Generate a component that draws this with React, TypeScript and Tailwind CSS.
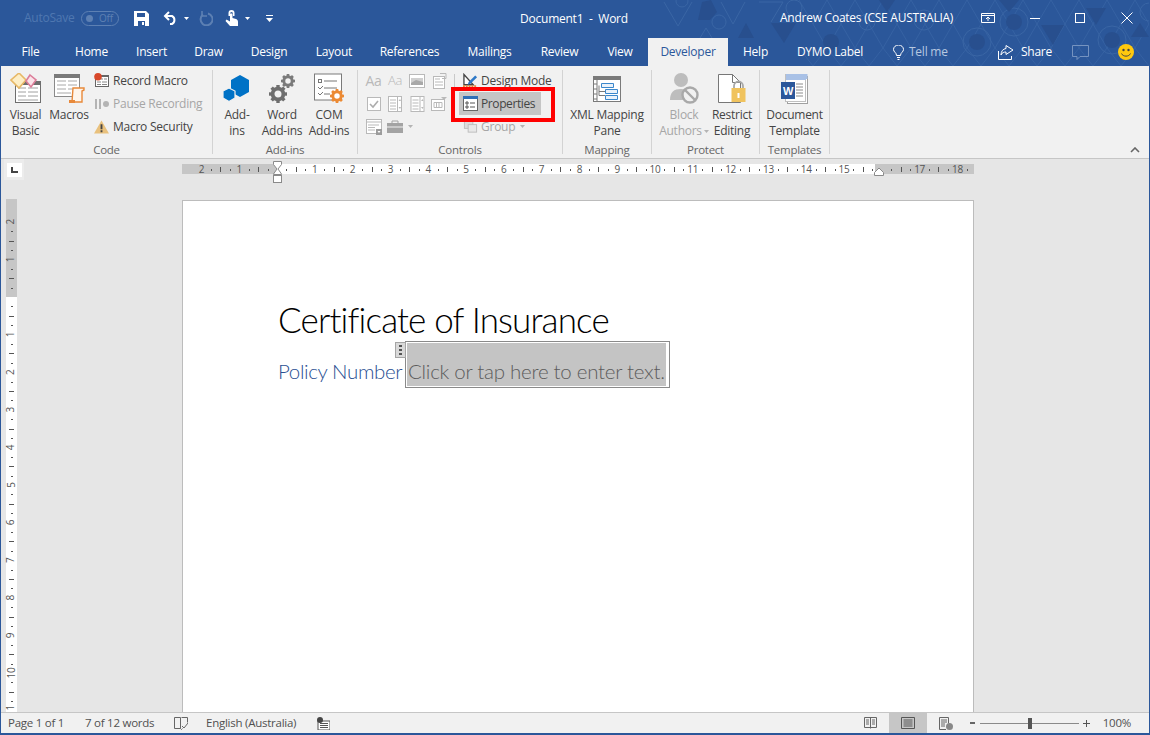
import React from "react";

const Caret = ({ c = "#fff", w = 5 }: { c?: string; w?: number }) => (
  <svg width={w} height={3} viewBox="0 0 5 3" className="shrink-0"><path d="M0 0h5L2.500 3z" fill={c} /></svg>
);

const Pattern = () => {
  const tri: string[] = [];
  for (let i = 0; i < 13; i++) {
    const x = 800 + i * 28;
    tri.push(`M${x} 0l14 24 14-24`);
    tri.push(`M${x + 14} 24l14 24 14-24`);
    tri.push(`M${x} 48l14 18 14-18`);
  }
  return (
    <svg width={490} height={66} viewBox="660 0 490 66" className="absolute right-0 top-0" fill="none">
      <g stroke="#3a66a5" strokeWidth="1">
        <path d="M665 2l14 24 14-24M722 2l12 22 12-22M695 48l12-20 12 20M760 2h24l-12 20M705 48l-10 18" />
        <circle cx="720" cy="22" r="7" /><circle cx="683" cy="1" r="6" /><circle cx="795" cy="8" r="8" />
        <path d={tri.join("")} opacity=".75" />
        <circle cx="1015" cy="22" r="14" /><circle cx="978" cy="42" r="14" /><circle cx="1113" cy="40" r="14" />
        <circle cx="925" cy="20" r="10" /><circle cx="1150" cy="12" r="9" /><circle cx="868" cy="22" r="8" />
      </g>
      <g fill="#284f8e">
        <path d="M703 2l9-2 6 12-7 8-12 0z" /><path d="M747 23l8 15h-16z" /><path d="M772 23h25l-12 20z" />
        <circle cx="832" cy="42" r="8" /><circle cx="978" cy="42" r="8" /><circle cx="1015" cy="22" r="8" /><circle cx="1113" cy="40" r="8" />
        <path d="M1042 25h23l-11 20z" /><path d="M1087 8h20l-10 17z" /><path d="M1132 37l9-14 9 14z" /><path d="M1000 0h20l-10 12z" />
        <path d="M880 0h16l-8 12z" />
      </g>
    </svg>
  );
};

const TABS: [string, string][] = [
  ["File", "w-[59px]"], ["Home", "w-[63px]"], ["Insert", "w-[57px]"], ["Draw", "w-[57px]"], ["Design", "w-[64px]"],
  ["Layout", "w-[66px]"], ["References", "w-[85px]"], ["Mailings", "w-[75px]"], ["Review", "w-[65px]"], ["View", "w-[56px]"],
];

const Group = ({ w, label, children }: { w: string; label: string; children?: React.ReactNode }) => (
  <>
    <div className={`${w} h-full flex flex-col shrink-0`}>
      <div className="h-[77px] flex">{children}</div>
      <div className="h-[14px] text-center leading-[14px] text-[#666] text-[11.5px]">{label}</div>
    </div>
    <div className="w-px bg-[#d3d3d3] mt-[4px] mb-[4px] shrink-0" />
  </>
);

const Large = ({ w, icon, lines, dim }: { w: string; icon: React.ReactNode; lines: React.ReactNode[]; dim?: boolean }) => (
  <div className={`${w} flex flex-col items-center shrink-0 pt-[6px]`}>
    <div className="h-[33px] flex items-center justify-center">{icon}</div>
    <div className={`text-center leading-[16px] pt-[2px] whitespace-nowrap ${dim ? "text-[#a6a6a6]" : "text-[#444]"}`}>
      {lines.map((l, i) => <div key={i} className="flex justify-center items-center gap-[3px]">{l}</div>)}
    </div>
  </div>
);

const Small = ({ icon, text, dim, caret, tight }: { icon: React.ReactNode; text: string; dim?: boolean; caret?: boolean; tight?: boolean }) => (
  <div className={`h-[23px] flex items-center whitespace-nowrap ${dim ? "text-[#a6a6a6]" : "text-[#444]"}`}>
    <div className="w-[15px] h-[16px] flex items-center justify-center shrink-0">{icon}</div>
    <span className={tight ? "ml-[3px]" : "ml-[4px]"}>{text}</span>
    {caret && <span className="ml-[5px]"><Caret c="#b4b4b4" /></span>}
  </div>
);

/* ---- ribbon icons ---- */
const VisualBasicIcon = () => (
  <svg width={32} height={32} viewBox="0 0 32 32">
    <rect x="5.500" y="8.500" width="25" height="21" fill="#fff" stroke="#6e6e6e" />
    <rect x="5" y="8" width="26" height="4" fill="#6e6e6e" />
    <path d="M8 15h8M18 15h10M8 19h8M18 19h10M8 23h8M18 23h10M8 27h20" stroke="#a0a0a0" />
    <path d="M9 0l7 7-7 8-8-8z" fill="#fdeec6" stroke="#e7b866" strokeWidth="1.600" />
    <path d="M20 2l6 5-5 7-5-6z" fill="#fbe3ea" stroke="#dc7d99" strokeWidth="1.600" />
  </svg>
);
const MacrosIcon = () => (
  <svg width={32} height={32} viewBox="0 0 32 32">
    <rect x="1.500" y="1.500" width="25" height="22" fill="#fff" stroke="#8a8a8a" />
    <rect x="1" y="1" width="26" height="4" fill="#7a7a7a" />
    <path d="M4 8h9M15 8h9M4 12h9M15 12h9M4 16h9M15 16h9M4 20h14" stroke="#a8a8a8" />
    <path d="M20 15h11v2l-2 1v11h-10z" fill="#fff6ec" stroke="#e8893a" strokeWidth="1.400" />
    <path d="M16 27h6v3h-6z" fill="#e8893a" />
  </svg>
);
const RecordIcon = () => (
  <svg width={15} height={15} viewBox="0 0 15 15">
    <rect x="1.500" y="2.500" width="13" height="11" fill="#fff" stroke="#666" />
    <rect x="1" y="2" width="14" height="2" fill="#666" />
    <path d="M7 6h2M10 6h3M3 9h4M8 9h5M3 11.500h4M8 11.500h5" stroke="#888" />
    <circle cx="4" cy="3.800" r="3.800" fill="#d8482a" />
  </svg>
);
const PauseIcon = () => (
  <svg width={15} height={10} viewBox="0 0 15 10"><path d="M1 0h2v10H1zM5 0h2v10H5z" fill="#b4b4b4" /><circle cx="12" cy="5" r="3" fill="#b4b4b4" /></svg>
);
const WarnIcon = () => (
  <svg width={16} height={14} viewBox="0 0 16 14"><path d="M8 0l8 14H0z" fill="#e9c17d" /><path d="M7 4h2v5.500H7zM7 10.500h2V12.500H7z" fill="#444" /></svg>
);
const AddInsIcon = () => (
  <svg width={28} height={28} viewBox="0 0 28 28">
    <path d="M17 0l9 5v12l-9 5-9-5V5z" fill="#0072c6" />
    <path d="M6 13l6 3v7l-6 3.500L0 23v-7z" fill="#0072c6" stroke="#f1f1f1" strokeWidth="1.200" />
  </svg>
);
const Gear = ({ cx, cy, r, c }: { cx: number; cy: number; r: number; c: string }) => (
  <g>
    <circle cx={cx} cy={cy} r={r * 0.6} fill="none" stroke={c} strokeWidth={r * 0.42} />
    <g stroke={c} strokeWidth={r * 0.38}>
      {[0, 45, 90, 135, 180, 225, 270, 315].map((a) => {
        const dx = Math.cos((a * Math.PI) / 180), dy = Math.sin((a * Math.PI) / 180);
        return <line key={a} x1={cx + dx * r * 0.7} y1={cy + dy * r * 0.7} x2={cx + dx * r} y2={cy + dy * r} />;
      })}
    </g>
  </g>
);
const WordAddinsIcon = () => (
  <svg width={28} height={30} viewBox="0 0 28 30"><Gear cx={20} cy={7} r={7} c="#7a7a7a" /><Gear cx={10} cy={20} r={9} c="#6e6e6e" /></svg>
);
const ComIcon = () => (
  <svg width={32} height={32} viewBox="0 0 32 32">
    <rect x="1.500" y="1" width="27" height="26" fill="#fff" stroke="#7a7a7a" />
    <rect x="5.500" y="6.500" width="3" height="3" fill="none" stroke="#777" />
    <path d="M11 8h13M5 14l2 2 3-3M11 15h13M5 20l2 2 3-3M11 21h6" stroke="#777" fill="none" />
    <Gear cx={24} cy={23} r={7} c="#ec8a33" />
  </svg>
);
const D = "#b9b9b9";
const Aa1 = () => <span className="text-[14px] font-medium leading-none text-[#b9b9b9]">Aa</span>;
const Aa2 = () => <span className="text-[13px] font-light leading-none text-[#b9b9b9]">Aa</span>;
const PicIcon = () => (<svg width={16} height={14} viewBox="0 0 16 14"><rect x=".5" y=".5" width="15" height="13" fill="#fff" stroke={D} /><path d="M2 4h12v7H2z" fill="#cfcfcf" /><path d="M2 9l5-3 7 2v3H2z" fill="#a8a8a8" /></svg>);
const BuildIcon = () => (<svg width={16} height={16} viewBox="0 0 16 16" fill="none" stroke={D}><rect x="2.500" y="3.500" width="11" height="12" fill="#fff" /><path d="M4 6h5M4 9h8M4 12h8M9 .5h6v5h-4" /></svg>);
const CheckIcon = () => (<svg width={14} height={14} viewBox="0 0 14 14" fill="none"><rect x=".5" y=".5" width="13" height="13" stroke={D} fill="#fff" /><path d="M3 7l3 3 5-6" stroke="#adadad" strokeWidth="1.600" /></svg>);
const ListIcon = ({ w = 16 }: { w?: number }) => (<svg width={w} height={16} viewBox="0 0 14 16" fill="none" stroke={D}><rect x=".5" y=".5" width="13" height="15" fill="#fff" /><path d="M2 4h6M2 7h6M2 10h6M2 13h6M9.500 0v16" /><path d="M10.500 5l1.500-2 1 2zM10.500 11l1.500 2 1-2z" fill={D} stroke="none" /></svg>);
const TableIcon = () => (<svg width={16} height={14} viewBox="0 0 16 14" fill="none" stroke={D}><rect x=".5" y="2.500" width="13" height="11" fill="#fff" /><path d="M3 5.500h8v5H3zM5.500 5.500v5M8 5.500v5" /><path d="M10 0h6l-3 3z" fill={D} stroke="none" /></svg>);
const FormIcon = () => (<svg width={16} height={16} viewBox="0 0 16 16" fill="none" stroke={D}><rect x=".5" y=".5" width="15" height="14" fill="#fff" /><path d="M0 3h16M2 6h11M2 8.500h7M2 11h7" /><path d="M10 10h6v6h-6z" fill="#9c9c9c" stroke="none" /><path d="M11.500 12h3L13 14z" fill="#fff" stroke="none" /></svg>);
const CaseIcon = () => (<svg width={18} height={13} viewBox="0 0 18 13"><path d="M0 3h16v10H0z" fill="#a3a3a3" /><path d="M5 3V1h6v2" fill="none" stroke="#a3a3a3" /><path d="M0 7h16" stroke="#f1f1f1" /></svg>);
const DesignIcon = () => (
  <svg width={16} height={16} viewBox="0 0 16 16">
    <path d="M1 1v11h10z" fill="#fff" stroke="#444" strokeWidth="1.400" />
    <path d="M6 9l7-7 2 2-7 7-3 1z" fill="#2f79c7" />
    <path d="M0 13.500h14" stroke="#e8893a" strokeWidth="2" strokeDasharray="2 1" />
  </svg>
);
const PropIcon = () => (
  <svg width={15} height={15} viewBox="0 0 15 15">
    <rect x=".5" y=".5" width="14" height="14" fill="#fff" stroke="#666" />
    <rect x="0" y="0" width="15" height="3" fill="#2f6fb7" />
    <path d="M3 6h2v2H3zM3 10h2v2H3z" fill="none" stroke="#555" /><path d="M7 7h5M7 11h5" stroke="#555" />
  </svg>
);
const GroupIcon = () => (
  <svg width={16} height={15} viewBox="0 0 16 15" fill="none" stroke="#bdbdbd">
    <rect x="1.500" y="1.500" width="9" height="8" fill="#dcdcdc" /><rect x="5.500" y="5.500" width="9" height="8" fill="#e8e8e8" />
  </svg>
);
const XmlIcon = () => (
  <svg width={28} height={26} viewBox="0 0 28 26">
    <rect x=".5" y=".5" width="27" height="25" fill="#fff" stroke="#7a7a7a" />
    <rect x="0" y="0" width="28" height="4" fill="#7a7a7a" /><path d="M4 0v26M1 8h3M1 13h3M1 18h3M1 23h3" stroke="#7a7a7a" />
    <path d="M8.500 7.500h12v4h-12zM12.500 13.500h12v4h-12zM12.500 19.500h12v4h-12z" fill="#e9f2fb" stroke="#3a87cc" />
    <path d="M6 9.500v10h6M6 15.500h6" stroke="#7a7a7a" fill="none" />
  </svg>
);
const BlockIcon = () => (
  <svg width={31} height={31} viewBox="0 0 31 31">
    <circle cx="12" cy="7" r="7" fill="#bdbdbd" /><path d="M1 27c0-8 4-11 11-11s11 3 11 11z" fill="#bdbdbd" />
    <circle cx="21" cy="22" r="7.500" fill="#f1f1f1" stroke="#a9a9a9" strokeWidth="2.400" /><path d="M16 17l10 10" stroke="#a9a9a9" strokeWidth="2.400" />
  </svg>
);
const RestrictIcon = () => (
  <svg width={30} height={32} viewBox="0 0 30 32">
    <path d="M1.500 1.500h14l8 8v20h-22z" fill="#fff" stroke="#777" /><path d="M15.500 1.500v8h8" fill="none" stroke="#777" />
    <path d="M17 15v-2a4.500 4.500 0 0 1 9 0v2" fill="none" stroke="#a8a8a8" strokeWidth="1.800" />
    <rect x="14.500" y="15" width="14" height="14" fill="#f0c35e" /><rect x="20.500" y="20" width="2" height="5" fill="#fff" />
  </svg>
);
const TemplateIcon = () => (
  <svg width={28} height={30} viewBox="0 0 28 30">
    <rect x="6.500" y="2.500" width="20" height="27" fill="#fff" stroke="#a0a0a0" /><rect x="5.500" y="0" width="21" height="5" fill="#a9c1e6" />
    <rect x="4.500" y=".5" width="20" height="27" fill="#fff" stroke="#c0c0c0" /><rect x="5" y="0" width="20" height="6" fill="#a9c1e6" />
    <path d="M15 10h7M15 13h7M15 16h7M15 19h7M15 22h7" stroke="#8c8c8c" />
    <rect x="0" y="8" width="14" height="17" fill="#2b579a" />
    <text x="7" y="20.500" textAnchor="middle" fill="#fff" fontSize="11" fontWeight="700" fontFamily="Liberation Sans">W</text>
  </svg>
);

/* ---- rulers ---- */
const HRuler = () => {
  const cm = 37.8, o = 95;
  const marks: React.ReactNode[] = [];
  for (let n = -2; n <= 18; n++) {
    const x = o + n * cm;
    if (n !== 0 && n !== 16) marks.push(<text key={"t" + n} x={x} y={12} textAnchor="middle" fontSize="10" fill="#555" fontFamily="Open Sans">{Math.abs(n)}</text>);
    [0.25, 0.5, 0.75].forEach((f) => {
      const px = x + f * cm;
      if (px < 2 || px > 790) return;
      if (f === 0.5) marks.push(<rect key={`m${n}${f}`} x={Math.round(px)} y={6} width={1} height={5} fill="#555" />);
      else marks.push(<rect key={`m${n}${f}`} x={Math.round(px)} y={8} width={1} height={2} fill="#555" />);
    });
  }
  return (
    <svg width={800} height={26} viewBox="0 0 800 26" className="block">
      <rect x="0" y="3" width="792" height="10" fill="#fff" />
      <rect x="0" y="3" width="95" height="10" fill="#c6c6c6" /><rect x="693" y="3" width="99" height="10" fill="#c6c6c6" />
      {marks}
      <path d="M91.500 .5h8v3l-3.500 4.500 3.500 5v.5h-8v-.5l3.500-5-3.500-4.500z" fill="#fff" stroke="#8a8a8a" />
      <rect x="91.500" y="14.500" width="8" height="7" fill="#fff" stroke="#8a8a8a" />
      <path d="M692.500 14.500h9v-3l-4.500-4.500-4.500 4.500z" fill="#fff" stroke="#8a8a8a" />
    </svg>
  );
};
const VRuler = () => {
  const cm = 37.6, o = 98;
  const marks: React.ReactNode[] = [];
  for (let n = -2; n <= 11; n++) {
    const y = o + n * cm;
    if (n !== 0) marks.push(<text key={"t" + n} x={5.500} y={y + 3} textAnchor="middle" fontSize="10" fill="#555" fontFamily="Open Sans" transform={`rotate(-90 5.500 ${y})`}>{Math.abs(n)}</text>);
    [0.25, 0.5, 0.75].forEach((f) => {
      const py = Math.round(y + f * cm);
      if (py > 513) return;
      if (f === 0.5) marks.push(<rect key={`m${n}${f}`} x={3} y={py} width={5} height={1} fill="#555" />);
      else marks.push(<rect key={`m${n}${f}`} x={5} y={py} width={2} height={1} fill="#555" />);
    });
  }
  return (
    <svg width={17} height={513} viewBox="-3 0 17 513" className="block">
      <rect width="11" height="513" fill="#fff" /><rect width="11" height="98" fill="#c6c6c6" />{marks}
    </svg>
  );
};

export default function App() {
  return (
    <div className="w-[1150px] h-[735px] overflow-hidden flex flex-col border-x border-b-2 border-[#2b579a] bg-[#f1f1f1] font-['Open_Sans',sans-serif] text-[12px] tracking-[-0.25px]">
      {/* title + tabs */}
      <div className="bg-[#2b579a] relative h-[66px] shrink-0 text-white">
        <Pattern />
        <div className="relative h-[38px] flex items-center pb-[2px]">
          <div className="ml-[23px] w-[57px] text-[#4f77b1] text-[12px]">AutoSave</div>
          <div className="w-[38px] h-[15px] rounded-full border border-[#5d80b3] flex items-center pl-[4px] gap-[6px] text-[10px] text-[#5d80b3]">
            <span className="w-[7px] h-[7px] rounded-full bg-[#5d80b3]" /><span>Off</span>
          </div>
          <svg width={15} height={15} viewBox="0 0 15 15" className="ml-[15px]"><path d="M0 0h12l3 3v12H0z" fill="#fff" /><path d="M3 2h8v4H3zM4 10h7v5H4z" fill="#2b579a" /><path d="M8 11h2v3H8z" fill="#fff" /></svg>
          <svg width={15} height={14} viewBox="0 0 15 14" className="ml-[14px]" fill="none" stroke="#fff" strokeWidth="2"><path d="M6 1L2 5l4 4" /><path d="M2 5h7a4.500 4.500 0 0 1 0 8H7" /></svg>
          <span className="ml-[6px]"><Caret /></span>
          <svg width={14} height={15} viewBox="0 0 14 15" className="ml-[10px]" fill="none" stroke="#5d80b3" strokeWidth="2"><path d="M9 2.500a6 6 0 1 1-5 1" /><path d="M3 0v5h5" strokeWidth="1.600" /></svg>
          <svg width={13} height={16} viewBox="0 0 13 16" className="ml-[12px]"><path d="M3.500 6V3a3 3 0 0 1 6 0v3H8V3.500a1.500 1.500 0 0 0-3 0V6z" fill="#fff" /><path d="M5 3.500h2.500v4.500l3.500 1c1.500.5 2 1.500 2 3V16H5l-4.500-5 1-1.500L5 11.500z" fill="#fff" /></svg>
          <span className="ml-[7px]"><Caret /></span>
          <svg width={7} height={7} viewBox="0 0 7 7" className="ml-[16px]"><path d="M0 0h7v1H0zM0 3h7L3.500 7z" fill="#fff" /></svg>
          <div className="ml-[226px] mt-[2px] w-[150px] text-center whitespace-nowrap">Document1&nbsp; -&nbsp; Word</div>
          <div className="ml-[131px] w-[180px] whitespace-nowrap">Andrew Coates (CSE AUSTRALIA)</div>
          <svg width={14} height={10} viewBox="0 0 14 10" className="ml-[21px]" fill="none" stroke="#fff"><path d="M.5.500h13v9H.5zM.5 2.500h13M7 8V4M5 6l2-2 2 2" /></svg>
          <div className="ml-[35px] w-[10px] h-px bg-white" />
          <div className="ml-[35px] w-[10px] h-[10px] border border-white" />
          <svg width={12} height={12} viewBox="0 0 12 12" className="ml-[36px]" stroke="#fff"><path d="M.5.500l11 11M11.500.500l-11 11" /></svg>
        </div>
        <div className="relative h-[28px] flex items-center">
          {TABS.map(([t, w]) => <div key={t} className={`${w} text-center`}>{t}</div>)}
          <div className="w-[80px] h-[28px] bg-[#f1f1f1] text-[#2b579a] flex items-center justify-center">Developer</div>
          <div className="w-[55px] text-center">Help</div>
          <div className="w-[94px] text-center whitespace-nowrap">DYMO Label</div>
          <svg width={11} height={15} viewBox="0 0 11 15" className="ml-[16px]" fill="none" stroke="#fff"><path d="M3.500 10.500c0-3-3-3.500-3-6a5 4.500 0 0 1 10 0c0 2.500-3 3-3 6zM4 12.500h3M4.500 14.500h2" /></svg>
          <div className="ml-[5px] w-[60px] text-[#b7c8e0] whitespace-nowrap">Tell me</div>
          <svg width={16} height={15} viewBox="0 0 16 15" className="ml-[29px]" fill="none" stroke="#fff"><path d="M.5 6v8.500h13V11" /><path d="M8 .5l7 4.500-7 4.500V7c-2 0-4 .5-5 3 0-4 2-6 5-6.500z" /></svg>
          <div className="ml-[7px] w-[40px] whitespace-nowrap">Share</div>
          <svg width={17} height={15} viewBox="0 0 17 15" className="ml-[11px]" fill="none" stroke="#7593c0"><path d="M.5.500h16v11H8l-3 3v-3H.5z" /></svg>
          <svg width={16} height={16} viewBox="0 0 16 16" className="ml-[29px]"><circle cx="8" cy="8" r="8" fill="#ffc90e" /><circle cx="5.500" cy="6" r="1.200" fill="#444" /><circle cx="10.500" cy="6" r="1.200" fill="#444" /><path d="M3.500 9.500c1.500 3.500 7.500 3.500 9 0" fill="none" stroke="#444" /></svg>
        </div>
      </div>

      {/* ribbon */}
      <div className="h-[93px] shrink-0 border-b border-[#c6c6c6] flex relative">
        <Group w="w-[211px]" label="Code">
          <div className="ml-[2px]"><Large w="w-[45px]" icon={<VisualBasicIcon />} lines={["Visual", "Basic"]} /></div>
          <Large w="w-[42px]" icon={<MacrosIcon />} lines={["Macros"]} />
          <div className="ml-[4px] pt-[3px]">
            <Small icon={<RecordIcon />} text="Record Macro" />
            <Small icon={<PauseIcon />} text="Pause Recording" dim />
            <Small icon={<WarnIcon />} text="Macro Security" />
          </div>
        </Group>
        <Group w="w-[144px]" label="Add-ins">
          <div className="ml-[3px]"><Large w="w-[42px]" icon={<AddInsIcon />} lines={["Add-", "ins"]} /></div>
          <Large w="w-[48px]" icon={<WordAddinsIcon />} lines={["Word", "Add-ins"]} />
          <Large w="w-[46px]" icon={<ComIcon />} lines={["COM", "Add-ins"]} />
        </Group>
        <Group w="w-[204px]" label="Controls">
          <div className="ml-[5px] pt-[3px] w-[87px]">
            <div className="h-[23px] flex items-center">
              <div className="w-[21px] flex justify-center"><Aa1 /></div>
              <div className="w-[22px] flex justify-center"><Aa2 /></div>
              <div className="w-[22px] flex justify-center"><PicIcon /></div>
              <div className="w-[22px] flex justify-center"><BuildIcon /></div>
            </div>
            <div className="h-[23px] flex items-center">
              <div className="w-[21px] flex justify-center"><CheckIcon /></div>
              <div className="w-[22px] flex justify-center"><ListIcon /></div>
              <div className="w-[22px] flex justify-center"><ListIcon w={15} /></div>
              <div className="w-[22px] flex justify-center"><TableIcon /></div>
            </div>
            <div className="h-[23px] flex items-center">
              <div className="w-[21px] flex justify-center"><FormIcon /></div>
              <div className="w-[24px] flex justify-center"><CaseIcon /></div>
              <Caret c="#b4b4b4" />
            </div>
          </div>
          <div className="w-px h-[15px] bg-[#c9c9c9] mt-[8px] ml-[4px]" />
          <div className="ml-[4px] pt-[3px] w-[96px]">
            <div className="pl-[4px]"><Small icon={<DesignIcon />} text="Design Mode" tight /></div>
            <div className="relative h-[23px] w-[82px] bg-[#c5c5c5] flex items-center pl-[4px] text-[#444]">
              <div className="w-[15px] h-[16px] flex items-center justify-center shrink-0"><PropIcon /></div>
              <span className="ml-[3px] tracking-[-0.4px]">Properties</span>
              <div className="absolute left-[-8px] top-[-5px] w-[104px] h-[35px] border-[4px] border-[#ff0000]" />
            </div>
            <div className="pl-[4px]"><Small icon={<GroupIcon />} text="Group" dim caret tight /></div>
          </div>
        </Group>
        <Group w="w-[88px]" label="Mapping">
          <Large w="w-[88px]" icon={<XmlIcon />} lines={["XML Mapping", "Pane"]} />
        </Group>
        <Group w="w-[107px]" label="Protect">
          <div className="ml-[8px]"><Large w="w-[48px]" icon={<BlockIcon />} lines={[<span className="text-[#a6a6a6]">Block</span>, <span className="flex items-center gap-[2px] text-[#a6a6a6]">Authors<Caret c="#b4b4b4" /></span>]} /></div>
          <Large w="w-[48px]" icon={<RestrictIcon />} lines={["Restrict", "Editing"]} />
        </Group>
        <Group w="w-[69px]" label="Templates">
          <Large w="w-[69px]" icon={<TemplateIcon />} lines={["Document", "Template"]} />
        </Group>
        <svg width={10} height={6} viewBox="0 0 10 6" className="absolute right-[9px] bottom-[5px]" fill="none" stroke="#666" strokeWidth="1.600"><path d="M1 5l4-4 4 4" /></svg>
      </div>

      {/* work area */}
      <div className="flex-1 min-h-0 flex bg-[#e6e6e6]">
        <div className="w-[181px] shrink-0">
          <div className="ml-[3px] w-[20px] h-[21px] bg-[#ececec] flex items-center justify-center">
            <div className="w-[15px] h-[14px] bg-white flex items-center justify-center">
              <svg width={7} height={6} viewBox="0 0 7 6"><path d="M0 0h2v4h5v2H0z" fill="#444" /></svg>
            </div>
          </div>
          <div className="ml-[2px] mt-[19px]"><VRuler /></div>
        </div>
        <div className="flex-1 min-w-0">
          <div className="h-[41px] pt-[2px]"><HRuler /></div>
          <div className="w-[792px] h-[513px] bg-white border-x border-t border-[#bcbcbc] pl-[95px] pt-[96px] text-black">
            <div className="font-['Lato',sans-serif] font-light text-[35px] leading-[44px] tracking-[-0.85px] whitespace-nowrap">Certificate of Insurance</div>
            <div className="flex items-center h-[45px] mt-[1px] font-['Lato',sans-serif] font-light text-[20.5px] whitespace-nowrap">
              <span className="text-[#2a4f92] w-[127px] pt-[14px] tracking-[-0.38px]">Policy Number</span>
              <div className="relative w-[265px] h-[47px] border border-[#8a8a8a] p-[1px] pr-[3px]">
                <div className="h-full bg-[#c4c4c4] flex items-center pl-[1px] pt-[14px] text-[#5c5c5c] tracking-[-0.27px]">Click or tap here to enter text.</div>
                <div className="absolute left-[-11px] top-0 w-[11px] h-[16px] bg-[#d9d9d9] border border-[#a5a5a5] flex flex-col items-center justify-center gap-[2px]">
                  <span className="w-[3px] h-[2px] bg-[#555]" /><span className="w-[3px] h-[2px] bg-[#555]" /><span className="w-[3px] h-[2px] bg-[#555]" />
                </div>
              </div>
            </div>
          </div>
        </div>
      </div>

      {/* status */}
      <div className="h-[21px] shrink-0 border-t border-[#c6c6c6] flex items-center text-[#505050] text-[11.5px] whitespace-nowrap">
        <span className="ml-[7px] w-[77px]">Page 1 of 1</span>
        <span className="w-[89px]">7 of 12 words</span>
        <svg width={14} height={14} viewBox="0 0 14 14" fill="none" stroke="#666"><path d="M6.500 1.500H.5v11h6zM6.500 12.500l1 1 1-1M7.500 1.500h6v5M8 10l2 2 4-5" /></svg>
        <span className="ml-[18px] w-[111px]">English (Australia)</span>
        <svg width={13} height={13} viewBox="0 0 13 13"><rect x="1" y="4" width="12" height="9" fill="#fff" stroke="#555" /><path d="M3 6h8v1H3zM3 8h8v1H3zM3 10h8v1H3z" fill="#555" /><circle cx="3" cy="3" r="3" fill="#444" /></svg>
        <div className="flex-1" />
        <svg width={13} height={13} viewBox="0 0 13 13" fill="none" stroke="#666"><path d="M.5.500h12v10h-12zM6.500.500v11M2 3h3M2 5h3M2 7h3M8 3h3M8 5h3M8 7h3" /></svg>
        <div className="ml-[12px] w-[38px] h-[20px] bg-[#c6c6c6] flex items-center justify-center">
          <svg width={14} height={12} viewBox="0 0 14 12" fill="none" stroke="#555"><path d="M.5.500h13v11H.5zM2.500 3h9M2.500 5h9M2.500 7h9M2.500 9h9" /></svg>
        </div>
        <svg width={14} height={13} viewBox="0 0 14 13" className="ml-[12px]" fill="none" stroke="#666"><path d="M7 12.500H.5V.5h9v6M2 3h6M2 5h6M2 7h4M2 9h4" /><circle cx="10.500" cy="9.500" r="3.500" fill="#888" stroke="none" /></svg>
        <div className="ml-[17px] w-[5px] h-[2px] bg-[#666]" />
        <div className="ml-[5px] w-[99px] h-px bg-[#8a8a8a] relative">
          <div className="absolute left-[48px] top-[-5px] w-[4px] h-[11px] bg-[#555]" />
        </div>
        <svg width={7} height={7} viewBox="0 0 7 7" className="ml-[4px]"><path d="M3 0h1v3h3v1H4v3H3V4H0V3h3z" fill="#555" /></svg>
        <span className="ml-[13px] mr-[18px]">100%</span>
      </div>
    </div>
  );
}
